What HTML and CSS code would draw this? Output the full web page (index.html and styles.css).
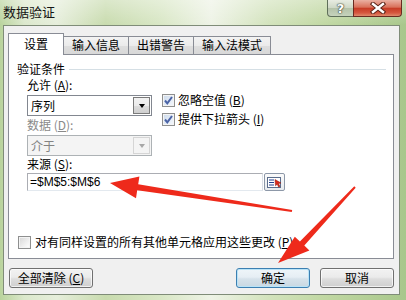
FILE: index.html
```html
<!DOCTYPE html>
<html lang="zh-CN">
<head>
<meta charset="utf-8">
<title>数据验证</title>
<link rel="stylesheet" href="styles.css">
</head>
<body>
<div class="window">
  <div class="titlebar">
    <span class="title">数据验证</span>
    <div class="caption-btns">
      <div class="cap help">?</div>
      <div class="cap close">
        <svg width="18" height="12" viewBox="0 0 18 12">
          <path d="M4 2 L14 10 M14 2 L4 10" stroke="#5a2418" stroke-width="4.4" stroke-linecap="square"/>
          <path d="M4 2 L14 10 M14 2 L4 10" stroke="#fff" stroke-width="2.4" stroke-linecap="square"/>
        </svg>
      </div>
    </div>
  </div>
  <div class="client">
    <div class="tabs">
      <div class="tab active">设置</div>
      <div class="tab w66">输入信息</div>
      <div class="tab w66">出错警告</div>
      <div class="tab w78">输入法模式</div>
    </div>
    <div class="panel">
      <div class="group-title"><span>验证条件</span><i class="rule"></i></div>
      <div class="cond">
        <div class="col-left">
          <div class="lbl">允许 (<u>A</u>):</div>
          <div class="select">
            <span class="val">序列</span>
            <span class="drop"><span class="caret"></span></span>
          </div>
          <div class="lbl dis">数据 (<u>D</u>):</div>
          <div class="select disabled">
            <span class="val">介于</span>
            <span class="drop"><span class="caret"></span></span>
          </div>
        </div>
        <div class="col-right">
          <div class="check-row">
            <span class="cb checked"><svg width="11" height="11" viewBox="0 0 11 11"><path d="M2 5.5 L4.3 8.3 L9 2" fill="none" stroke="#4a63a6" stroke-width="2"/></svg></span>
            <span>忽略空值 (<u>B</u>)</span>
          </div>
          <div class="check-row second">
            <span class="cb checked"><svg width="11" height="11" viewBox="0 0 11 11"><path d="M2 5.5 L4.3 8.3 L9 2" fill="none" stroke="#4a63a6" stroke-width="2"/></svg></span>
            <span>提供下拉箭头 (<u>I</u>)</span>
          </div>
        </div>
      </div>
      <div class="lbl src-lbl">来源 (<u>S</u>):</div>
      <div class="source-row">
        <div class="src-input">=$M$5:$M$6</div>
        <div class="ref-btn">
          <svg width="17" height="13" viewBox="0 0 17 13">
            <rect x="1.5" y="1.5" width="13" height="10" fill="#fff" stroke="#5b6d8c"/>
            <path d="M3 4 H8 M3 6.5 H8 M3 9 H8" stroke="#1f3f8f" stroke-width="1.2"/>
            <path d="M9 3.5 L15 7 L12.5 7.6 L14 10.5 L12.6 11 L11.2 8.2 L9.5 9.8 Z" fill="#d8281a" stroke="#8a1208" stroke-width="0.5"/>
          </svg>
        </div>
      </div>
      <div class="apply-all">
        <span class="cb"></span>
        <span>对有同样设置的所有其他单元格应用这些更改 (<u>P</u>)</span>
      </div>
    </div>
    <div class="buttons">
      <div class="btn clear">全部清除 (<u>C</u>)</div>
      <div class="btn ok">确定</div>
      <div class="btn cancel">取消</div>
    </div>
  </div>
  <svg class="arrows" width="406" height="300" viewBox="0 0 406 300">
    <polygon points="110,183 139.4,176.4 138.2,184.3 292.2,210 291.8,212 137.2,190.3 136,198.2" fill="#ee2a1b"/>
    <polygon points="278,263 294.8,236.8 299.9,241.6 354.3,186.3 355.7,187.7 304.3,245.6 309.4,250.4" fill="#ee2a1b"/>
  </svg>
</div>
</body>
</html>
```

FILE: styles.css
```css
* { box-sizing: border-box; }
html, body { margin: 0; padding: 0; }
body {
  width: 406px;
  height: 300px;
  overflow: hidden;
  font-family: "Noto Sans CJK SC", "Noto Sans", sans-serif;
  font-size: 12px;
  color: #000;
}
u { text-decoration: underline; text-underline-offset: 1px; }

.window {
  position: relative;
  width: 406px;
  height: 300px;
  display: flex;
  flex-direction: column;
  background:
    linear-gradient(180deg, rgba(255,255,255,0.35) 0px, rgba(255,255,255,0) 25px),
    linear-gradient(90deg, #b9d39c 0%, #dbe8cc 6%, #e6eedb 14%, #c8dbae 26%, #d9e7c6 40%, #eef3e6 52%, #d3e3bd 66%, #c1d8a3 80%, #a8c78b 100%);
}

.titlebar {
  height: 25px;
  display: flex;
  align-items: flex-start;
  justify-content: space-between;
}
.title {
  font-size: 13px;
  line-height: 24px;
  padding-left: 3px;
  color: #151515;
}
.caption-btns { display: flex; margin-right: 4px; }
.cap {
  height: 17px;
  border: 1px solid #5f6f5a;
  border-top: none;
  display: flex;
  align-items: center;
  justify-content: center;
}
.help {
  width: 27px;
  border-radius: 0 0 0 4px;
  background: linear-gradient(180deg, #e8ece2 0%, #cfd8c6 48%, #b4c2a9 52%, #c6d3bc 100%);
  color: #fff;
  font-family: "DejaVu Sans", sans-serif;
  font-weight: bold;
  font-size: 13px;
  line-height: 15px;
  text-shadow: 0 0 1px #404a3c, 0 0 1px #404a3c, 0 0 2px #404a3c;
}
.close {
  width: 49px;
  margin-left: -1px;
  border-radius: 0 0 4px 0;
  border-color: #6a2a20;
  background: linear-gradient(180deg, #eab0a2 0%, #d9705a 45%, #c73c26 52%, #d5563e 80%, #e08a6c 100%);
}

.client {
  margin-left: 3px;
  width: 397px;
  height: 270px;
  border: 1px solid #7f8c78;
  background: #f0f0f0;
  padding: 7px 5px 0 4px;
  display: flex;
  flex-direction: column;
}

.tabs {
  display: flex;
  align-items: flex-end;
  height: 21px;
}
.tab {
  height: 18px;
  width: 66px;
  margin-left: -1px;
  border: 1px solid #898c95;
  border-bottom: none;
  background: linear-gradient(180deg, #f3f3f3 0%, #ebebeb 50%, #dedede 51%, #d8d8d8 100%);
  text-align: center;
  line-height: 16px;
}
.tab.active {
  width: 56px;
  margin-left: 0;
  height: 22px;
  margin-bottom: -1px;
  background: #fff;
  position: relative;
  z-index: 1;
  line-height: 20px;
}
.tab.w78 { width: 78px; }

.panel {
  width: 386px;
  height: 205px;
  border: 1px solid #898c95;
  background: #fff;
  display: flex;
  flex-direction: column;
}

.group-title {
  display: flex;
  align-items: center;
  margin: 7px 7px 0 8px;
  line-height: 14px;
  height: 14px;
}
.group-title .rule {
  flex: 1;
  height: 1px;
  margin-left: 4px;
  background: #d5dfe5;
}

.cond {
  display: flex;
  padding-left: 18px;
}
.col-left { width: 125px; display: flex; flex-direction: column; }
.lbl {
  line-height: 16px;
  height: 16px;
  margin-top: 1px;
}
.lbl.dis { color: #8a8a8a; }

.select {
  margin-top: 2px;
  height: 21px;
  width: 125px;
  border: 1px solid #828790;
  background: #fff;
  display: flex;
  align-items: stretch;
}
.select .val {
  flex: 1;
  padding-left: 3px;
  line-height: 19px;
}
.select .drop {
  width: 17px;
  margin: 1px;
  border: 1px solid #7a7a7a;
  background: linear-gradient(180deg, #f2f2f2 0%, #ebebeb 50%, #dddddd 51%, #cfcfcf 100%);
  display: flex;
  align-items: center;
  justify-content: center;
}
.caret {
  width: 0;
  height: 0;
  border-top: 4px solid #000;
  border-left: 3.5px solid transparent;
  border-right: 3.5px solid transparent;
}
.select.disabled {
  border-color: #adb2b5;
  background: #f4f4f4;
  color: #838383;
}
.select.disabled .drop {
  border-color: #d5d5d5;
  background: #f4f4f4;
}
.select.disabled .caret { border-top-color: #a8a8a8; }

.col-right {
  margin-left: 10px;
  padding-top: 16px;
  display: flex;
  flex-direction: column;
}
.check-row {
  display: flex;
  align-items: center;
  height: 16px;
  line-height: 16px;
}
.check-row.second { margin-top: 3px; }

.cb {
  width: 13px;
  height: 13px;
  flex: none;
  margin-right: 3px;
  border: 1px solid #8e8f8f;
  background: linear-gradient(135deg, #d6d6d6 0%, #f4f4f4 70%, #ffffff 100%);
  box-shadow: inset 0 0 0 1px #f4f4f4;
  display: flex;
  align-items: center;
  justify-content: center;
}
.cb.checked {
  background: linear-gradient(135deg, #cbd9ea 0%, #eef3fa 80%);
}

.src-lbl { margin-top: 0; padding-left: 18px; }
.source-row {
  display: flex;
  padding-left: 18px;
  margin-top: 1px;
}
.src-input {
  width: 236px;
  height: 18px;
  border: 1px solid #abadb3;
  border-right-color: #dbdfe6;
  border-bottom-color: #e3e9ef;
  background: #fff;
  padding-left: 2px;
  line-height: 16px;
  font-family: "Liberation Sans", "Noto Sans CJK SC", sans-serif;
  font-size: 12px;
}
.ref-btn {
  width: 21px;
  height: 18px;
  margin-left: 1px;
  border: 1px solid #8d98a8;
  border-radius: 2px;
  background: linear-gradient(180deg, #fbfbfb 0%, #e8ebee 100%);
  display: flex;
  align-items: center;
  justify-content: center;
}

.apply-all {
  margin-top: auto;
  margin-bottom: 8px;
  padding-left: 9px;
  display: flex;
  align-items: center;
  height: 16px;
  line-height: 16px;
}
.apply-all .cb { margin-right: 4px; }

.buttons {
  display: flex;
  margin-top: 9px;
}
.btn {
  height: 20px;
  width: 74px;
  border: 1px solid #707070;
  border-radius: 3px;
  background: linear-gradient(180deg, #f2f2f2 0%, #ebebeb 45%, #dddddd 55%, #cfcfcf 100%);
  box-shadow: inset 0 0 0 1px rgba(255,255,255,0.7);
  text-align: center;
  line-height: 18px;
}
.btn.clear { width: 84px; margin-left: 1px; }
.btn.ok {
  margin-left: auto;
  border-color: #3c7fb1;
  box-shadow: inset 0 0 0 1px #b9e3f7;
  background: linear-gradient(180deg, #eef5f9 0%, #e6eef4 45%, #d6e2ea 55%, #c9d8e2 100%);
}
.btn.cancel { margin-left: 10px; }

.arrows {
  position: absolute;
  left: 0;
  top: 0;
  pointer-events: none;
}
```
